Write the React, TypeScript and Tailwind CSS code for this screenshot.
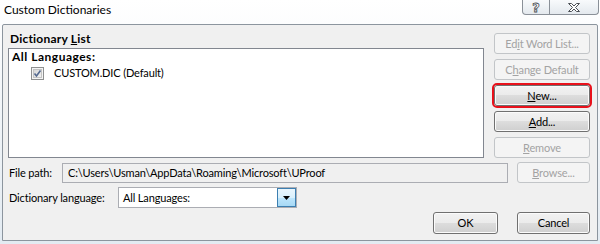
import React from "react";

const enabledBtn =
  "flex items-center justify-center whitespace-nowrap rounded-[3px] border border-[#707070] bg-[linear-gradient(#f2f2f2_0%,#ebebeb_50%,#dddddd_50%,#cfcfcf_100%)] shadow-[inset_0_0_0_1px_#fbfbfb] text-black";
const disabledBtn =
  "flex items-center justify-center whitespace-nowrap rounded-[3px] border border-[#c2c5c8] bg-[#f4f4f4] text-[#a3a3a3]";

function CheckBox() {
  return (
    <svg width="13" height="13" viewBox="0 0 13 13">
      <defs>
        <linearGradient id="cbg" x1="0" y1="0" x2="1" y2="1">
          <stop offset="0" stopColor="#d4d4d4" />
          <stop offset="1" stopColor="#f4f4f4" />
        </linearGradient>
      </defs>
      <rect x="0.5" y="0.5" width="12" height="12" fill="#f4f4f4" stroke="#8e8f8f" />
      <rect x="2.5" y="2.5" width="8" height="8" fill="url(#cbg)" stroke="#c4c4c4" />
      <path d="M3.5 6.5 L5.5 9 L9.5 3.5" fill="none" stroke="#54698f" strokeWidth="1.6" />
    </svg>
  );
}

export default function App() {
  return (
    <div className="w-[600px] h-[244px] overflow-hidden font-['Lato',sans-serif] text-[11px] leading-[16px] tracking-[-0.15px] text-black bg-[linear-gradient(180deg,#ffffff_0%,#f3f6f9_40%,#e3ebf2_100%)]">
      {/* Title bar */}
      <div className="h-[24px] flex justify-between items-start">
        <div className="pl-[4px] pt-[2px] text-[12px] leading-[16px] tracking-normal text-black whitespace-nowrap">Custom Dictionaries</div>
        <div className="mr-[1px] flex h-[15px] rounded-b-[4px] border border-t-0 border-[#8a9098] bg-[linear-gradient(#f8fafc,#e4e9ee)] overflow-hidden">
          <div className="w-[27px] border-r border-[#8a9098] flex items-center justify-center">
            <span className="font-['DejaVu_Sans',sans-serif] font-bold text-[13px] leading-[13px] text-white [-webkit-text-stroke:0.8px_#4a4f55]">?</span>
          </div>
          <div className="w-[48px] flex items-center justify-center">
            <svg width="14" height="11" viewBox="0 0 14 11">
              <path
                d="M1.5 1.5 H4.5 L7 4 L9.5 1.5 H12.5 L8.5 5.5 L12.5 9.5 H9.5 L7 7 L4.5 9.5 H1.5 L5.5 5.5 Z"
                fill="#ffffff"
                stroke="#4a4f55"
                strokeWidth="1"
                strokeLinejoin="round"
              />
            </svg>
          </div>
        </div>
      </div>

      {/* Dialog body */}
      <div className="ml-[2px] w-[596px] h-[217px] border border-[#8c959e] rounded-t-[2px] bg-[#f0f0f0] pl-[5px] pt-[6px]">
        {/* Row 1 */}
        <div className="flex">
          <div className="w-[476px] shrink-0 flex flex-col">
            <div className="h-[16px] pl-[2px] text-[12px] font-bold tracking-[0.2px] whitespace-nowrap">
              Dictionary <span className="underline">L</span>ist
            </div>
            <div className="mt-[1px] h-[110px] border border-[#828790] bg-white pl-[3px]">
              <div className="h-[16px] text-[12px] font-bold tracking-[0.5px] whitespace-nowrap">All Languages:</div>
              <div className="h-[16px] flex items-center">
                <div className="ml-[19px] w-[13px] h-[13px] shrink-0">
                  <CheckBox />
                </div>
                <span className="ml-[10px] whitespace-nowrap">CUSTOM.DIC (Default)</span>
              </div>
            </div>
          </div>
          <div className="ml-[10px] w-[96px] shrink-0 mt-[2px] flex flex-col gap-[5px]">
            <div className={`h-[21px] ${disabledBtn}`}>
              <span>
                Ed<span className="underline">i</span>t Word List...
              </span>
            </div>
            <div className={`h-[21px] ${disabledBtn}`}>
              <span>
                C<span className="underline">h</span>ange Default
              </span>
            </div>
            <div className={`h-[21px] ${enabledBtn} outline-2 outline-[#e8111b]`}>
              <span>
                <span className="underline">N</span>ew...
              </span>
            </div>
            <div className={`h-[21px] ${enabledBtn}`}>
              <span>
                <span className="underline">A</span>dd...
              </span>
            </div>
            <div className={`h-[21px] ${disabledBtn}`}>
              <span>
                <span className="underline">R</span>emove
              </span>
            </div>
          </div>
        </div>

        {/* Row 2: file path */}
        <div className="mt-[4px] flex items-center w-[582px] h-[21px]">
          <div className="w-[54px] shrink-0 pl-[1px] whitespace-nowrap">File path:</div>
          <div className="w-[446px] shrink-0 h-[20px] border border-[#abadb3] bg-[#f0f0f0] flex items-center pl-[5px] whitespace-nowrap overflow-hidden">
            C:\Users\Usman\AppData\Roaming\Microsoft\UProof
          </div>
          <div className={`ml-auto w-[73px] h-[21px] ${disabledBtn}`}>
            <span>
              <span className="underline">B</span>rowse...
            </span>
          </div>
        </div>

        {/* Row 3: dictionary language */}
        <div className="mt-[4px] flex items-center h-[21px]">
          <div className="w-[110px] shrink-0 pl-[1px] whitespace-nowrap">Dictionary language:</div>
          <div className="w-[179px] shrink-0 h-[21px] border border-[#abadb3] bg-white flex items-center">
            <div className="flex-1 pl-[4px] whitespace-nowrap">All Languages:</div>
            <div className="w-[19px] h-[19px] border border-[#3c7fb1] bg-[linear-gradient(#eaf6fd_0%,#d9f0fc_50%,#bee6fd_50%,#a7d9f5_100%)] flex items-center justify-center">
              <svg width="7" height="4" viewBox="0 0 7 4">
                <path d="M0 0 H7 L3.5 4 Z" fill="#000000" />
              </svg>
            </div>
          </div>
        </div>

        {/* Row 4: OK / Cancel */}
        <div className="mt-[4px] flex justify-end w-[582px] gap-[19px]">
          <div className={`w-[65px] h-[22px] ${enabledBtn}`}>OK</div>
          <div className={`w-[73px] h-[22px] ${enabledBtn}`}>Cancel</div>
        </div>
      </div>
    </div>
  );
}
